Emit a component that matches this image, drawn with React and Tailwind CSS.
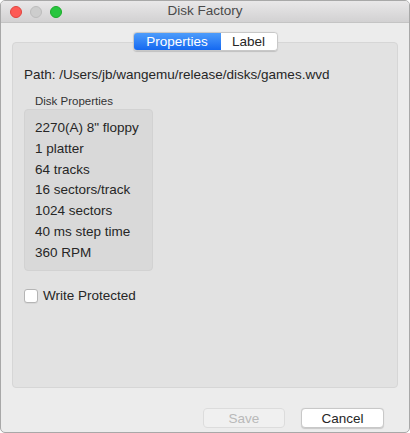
import React, { useState } from "react";

const font = { fontFamily: '"Liberation Sans", Arial, sans-serif' };

const props = [
  '2270(A) 8" floppy',
  "1 platter",
  "64 tracks",
  "16 sectors/track",
  "1024 sectors",
  "40 ms step time",
  "360 RPM",
];

const App = () => {
  const [tab, setTab] = useState("properties");
  const [writeProtected, setWriteProtected] = useState(false);

  return (
    <div className="w-[410px] h-[433px] bg-white" style={font}>
      <div className="w-[410px] h-[433px] flex flex-col rounded-[5px] border border-[#a8a8a8] bg-[#ececec] overflow-hidden">
        {/* Title bar */}
        <div className="h-[22px] shrink-0 flex items-center relative bg-gradient-to-b from-[#e9e8e9] to-[#d2d1d2] border-b border-[#c4c4c4]">
          <div className="flex gap-[8px] pl-[9px]">
            <span className="w-[12px] h-[12px] rounded-full bg-[#fd5b56] border border-[#e0443e]"></span>
            <span className="w-[12px] h-[12px] rounded-full bg-[#cdcdcd] border border-[#bcbcbc]"></span>
            <span className="w-[12px] h-[12px] rounded-full bg-[#28c63f] border border-[#1aab29]"></span>
          </div>
          <div className="absolute inset-0 flex items-center justify-center text-[13.5px] text-[#4a4a4a]">
            Disk Factory
          </div>
        </div>

        {/* Body */}
        <div className="flex-1 flex flex-col px-[11px] pt-[9px]">
          <div className="relative flex-1 flex flex-col">
            {/* Tab box */}
            <div className="mt-[10px] h-[346px] rounded-[4px] border border-[#d6d6d6] bg-[#e2e2e2] px-[11px] pt-[24px]">
              <div className="text-[13.5px] text-[#262626] leading-[16px]">
                Path: /Users/jb/wangemu/release/disks/games.wvd
              </div>
              <div className="mt-[12px] pl-[11px] text-[11.5px] text-[#333] leading-[13px]">
                Disk Properties
              </div>
              <div className="mt-[1px] w-[129px] h-[162px] rounded-[4px] border border-[#d2d2d2] bg-[#d9d9d9] pl-[10px] pt-[8px] flex flex-col">
                {props.map((p) => (
                  <div key={p} className="h-[20.8px] text-[13.5px] leading-[20.8px] text-[#262626]">
                    {p}
                  </div>
                ))}
              </div>
              <label className="mt-[15px] flex items-center gap-[5px] text-[13.5px] text-[#262626] cursor-default">
                <input
                  type="checkbox"
                  checked={writeProtected}
                  onChange={(e) => setWriteProtected(e.target.checked)}
                  className="appearance-none w-[14px] h-[14px] rounded-[3px] border border-[#b5b5b5] bg-white shadow-[0_1px_0_rgba(0,0,0,0.05)]"
                />
                Write Protected
              </label>
            </div>

            {/* Segmented control */}
            <div className="absolute top-0 left-0 right-0 flex justify-center">
              <div className="flex h-[19px] rounded-[4px] overflow-hidden border border-[#c8c8c8] text-[13.5px] shadow-[0_0.5px_1px_rgba(0,0,0,0.15)]">
                <button
                  onClick={() => setTab("properties")}
                  className={`w-[87px] leading-[17px] ${tab === "properties" ? "bg-gradient-to-b from-[#4d9cfb] to-[#1468f0] text-white" : "bg-white text-[#262626]"}`}
                >
                  Properties
                </button>
                <button
                  onClick={() => setTab("label")}
                  className={`w-[56px] leading-[17px] ${tab === "label" ? "bg-gradient-to-b from-[#4d9cfb] to-[#1468f0] text-white" : "bg-white text-[#262626]"}`}
                >
                  Label
                </button>
              </div>
            </div>
          </div>

          {/* Buttons */}
          <div className="h-[44px] flex items-end justify-end gap-[16px] pr-[14px] pb-[4px]">
            <button
              disabled
              className="w-[82px] h-[20px] rounded-[4px] border border-[#dcdcdc] bg-[#f0f0f0] text-[13.5px] text-[#b9b9b9]"
            >
              Save
            </button>
            <button className="w-[83px] h-[20px] rounded-[4px] border border-[#c8c8c8] bg-white text-[13.5px] text-[#262626] shadow-[0_0.5px_1px_rgba(0,0,0,0.15)]">
              Cancel
            </button>
          </div>
        </div>
      </div>
    </div>
  );
};

export default App;
